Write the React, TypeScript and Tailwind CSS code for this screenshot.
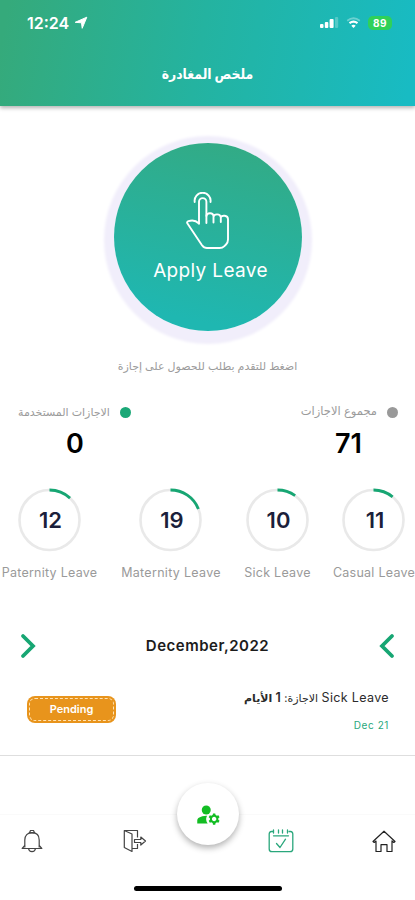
import { MdManageAccounts } from "react-icons/md";

const LEAVES = [
  { label: "Paternity Leave", days: 12, width: "w-[97px]", spacing: "tracking-[0.25px]" },
  { label: "Maternity Leave", days: 19, width: "w-[100px]", spacing: "tracking-[0.3px]" },
  { label: "Sick Leave", days: 10, width: "w-[67px]", spacing: "tracking-[0.25px]" },
  { label: "Casual Leave", days: 11, width: "w-[82px]", spacing: "tracking-[0.25px]" },
];

function StatusBar() {
  return (
    <div className="flex h-[46px] items-center justify-between pl-[27px] pr-[23px]">
      <div className="flex items-center gap-[5px]">
        <span className="text-[16px] font-semibold leading-none">12:24</span>
        <svg width="14" height="14" viewBox="0 0 14 14" fill="currentColor" stroke="currentColor" strokeLinejoin="round">
          <path d="M12.800 1.200 8.200 12.300 7.500 6.800 1.200 6.300Z" />
        </svg>
      </div>
      <div className="flex items-center">
        <svg width="19" height="12" viewBox="0 0 19 12" fill="currentColor">
          <rect x="0" y="7" width="3.500" height="4" rx="1" />
          <rect x="4.800" y="5" width="3.500" height="6" rx="1" />
          <rect x="9.600" y="2" width="4" height="9" rx="1" />
          <rect x="15" y="0" width="3.200" height="11" rx="1" opacity=".25" />
        </svg>
        <svg className="ml-[7px]" width="15" height="12" viewBox="0 0 15 12" fill="none" stroke="currentColor">
          <path d="M1.200 3.700q6.300-5 12.600 0" strokeWidth="1.800" opacity=".35" />
          <path d="M3.500 6.200q4-3 8 0" strokeWidth="2.200" />
          <path d="M5.300 8.700q2.200-1.700 4.400 0L7.500 11Z" fill="currentColor" stroke="none" />
        </svg>
        <span className="ml-[7px] flex h-[14px] w-[24px] items-center justify-center rounded-[5px] bg-[#2fd158] text-[10px] font-bold leading-none tracking-[0.5px]">
          89
        </span>
      </div>
    </div>
  );
}

function TapIcon() {
  return (
    <svg width="44" height="58" viewBox="15 12 44 58" fill="none" stroke="currentColor" strokeWidth="1.900" strokeLinecap="round" strokeLinejoin="round">
      <path d="M23.700 22a8 8 0 1 1 15.800 0" />
      <path d="M28 43.500V21.800a3.700 3.700 0 0 1 7.400 0V43" />
      <path d="M35.400 36c.3-3.300 6.600-4 7.100 0v6.500M42.500 37c.4-3.500 6.900-3.700 7.300.5v4.500M49.800 37.500c1-2.800 7-2.300 7.200 1.500v20.500q0 3-2 5l-1.600 1.600Q51.500 68 48.500 68H36q-3 0-5-2.800L26.800 59 16.300 43.300c-.6-1 .2-1.800 1.200-2.200 4.500-1.600 7.500-.6 10.500 2.400" />
    </svg>
  );
}

function LeaveRing({ days }: { days: number }) {
  return (
    <div className="grid size-[64px] place-items-center">
      <svg className="col-start-1 row-start-1" width="64" height="64" viewBox="0 0 64 64" fill="none">
        <circle cx="31.500" cy="32" r="30" stroke="#e9e9e9" strokeWidth="2.600" />
        <circle
          cx="31.500"
          cy="32"
          r="30"
          stroke="#17a673"
          strokeWidth="2.800"
          pathLength={100}
          strokeDasharray={`${days} 100`}
          transform="rotate(-90 31.500 32)"
        />
      </svg>
      <span className="col-start-1 row-start-1 pl-[2px] text-[22px] font-semibold leading-none text-[#1b1f3b]">{days}</span>
    </div>
  );
}

function BellIcon() {
  return (
    <svg width="22" height="24" viewBox="0 0 22 24" fill="none" stroke="currentColor" strokeWidth="1.200" strokeLinejoin="round">
      <path d="M8.500 3.800 9.500 1.500h3l1 2.300Z" />
      <path d="M3.800 18.500V11c0-4.500 2.700-7.300 7.200-7.300s7.200 2.800 7.200 7.300v7.500" />
      <path d="M3.800 16.500 1.200 19.500h19.600l-2.600-3M7.500 19.500c.6 4.200 6.400 4.200 7 0" />
    </svg>
  );
}

function ExitIcon() {
  return (
    <svg width="24" height="24" viewBox="0 0 24 24" fill="none" stroke="currentColor" strokeWidth="1.200" strokeLinejoin="round">
      <path d="M1.300 1.500 9 5v17.500l-7.700-4Z" />
      <path d="M1.300 1.500H14.500v7M14.500 15v4.500H9" />
      <path d="M11.500 10.500h6.300V8l4.700 4-4.700 4v-2.500h-6.300Z" />
    </svg>
  );
}

function CalendarIcon() {
  return (
    <svg width="26" height="24" viewBox="0 0 26 24" fill="none" stroke="currentColor" strokeWidth="1.300" strokeLinecap="round" strokeLinejoin="round">
      <path d="M5 2.500H3.500Q1.200 2.500 1.200 5v15q0 2.700 2.700 2.700h18.200q2.700 0 2.700-2.700V5q0-2.500-2.300-2.500H21" />
      <path d="M5.500 1v3M10.500 1v3M14.500 1v3M19.500 1v3M5.500 6.800h15M8.500 14.500l3.500 4 5.500-8.300" />
    </svg>
  );
}

function HomeIcon() {
  return (
    <svg width="24" height="23" viewBox="0 0 24 23" fill="none" stroke="currentColor" strokeWidth="1.200" strokeLinejoin="round">
      <path d="M1 11.500 12 1.200l11 10.300-1.200 1L20 11v10.500h-5v-6.800H9v6.800H4V11l-1.800 1.500Z" />
    </svg>
  );
}

interface StatProps {
  label: string;
  value: number;
  dot: string;
  text: string;
  pad: string;
}

function Stat({ label, value, dot, text, pad }: StatProps) {
  return (
    <div>
      <div className="flex h-[20px] items-center gap-[10px]">
        <span dir="rtl" className={`whitespace-nowrap text-[#9b9b9b] ${text}`}>{label}</span>
        <span className={`size-[11px] rounded-full ${dot}`} />
      </div>
      <div className={`mt-[8px] text-center text-[27px] font-semibold leading-[28px] text-black ${pad}`}>{value}</div>
    </div>
  );
}

export default function App() {
  return (
    <div className="flex h-[900px] w-[415px] flex-col overflow-hidden bg-white font-['Inter','DejaVu_Sans',sans-serif]">
      <header className="h-[106px] shrink-0 bg-[linear-gradient(100deg,#35aa7b_2%,#24b3a0_48%,#18bbc3_98%)] text-white shadow-[0_2px_4px_rgba(0,0,0,0.3)]">
        <StatusBar />
        <h1 dir="rtl" className="mt-[18px] scale-x-[0.89] text-center text-[14px] font-bold leading-[20px]">ملخص المغادرة</h1>
      </header>

      <section className="flex flex-col items-center pt-[37px]">
        <button className="flex size-[188px] flex-col items-center rounded-full bg-[linear-gradient(192deg,#32ab86_8%,#1fb7b1_88%)] pt-[49px] text-white shadow-[0_3px_3px_10px_#f1eefb]">
          <TapIcon />
          <span className="mt-[9px] pl-[6px] text-[19px] leading-[24px] tracking-[0.35px]">Apply Leave</span>
        </button>
        <p dir="rtl" className="mt-[25px] whitespace-nowrap text-[11px] leading-[20px] text-[#9b9b9b]">اضغط للتقدم بطلب للحصول على إجازة</p>
      </section>

      <section className="mt-[26px] flex justify-between pl-[18px] pr-[17px]">
        <Stat label="الاجازات المستخدمة" value={0} dot="bg-[#1ba877]" text="text-[11px]" pad="pl-px" />
        <Stat label="مجموع الاجازات" value={71} dot="bg-[#999999]" text="text-[11.500px]" pad="pr-[2px]" />
      </section>

      <section className="mt-[30px] flex gap-[23px] pl-px">
        {LEAVES.map((leave) => (
          <div key={leave.label} className={`flex shrink-0 flex-col items-center ${leave.width} last:-ml-px`}>
            <LeaveRing days={leave.days} />
            <span className={`mt-[12px] whitespace-nowrap text-[12.500px] leading-[17px] text-[#9a9a9a] ${leave.spacing}`}>{leave.label}</span>
          </div>
        ))}
      </section>

      <section className="mt-[52px] flex h-[26px] items-center justify-between px-[20px] text-[#17a673]">
        <svg width="16" height="26" viewBox="0 0 16 26" fill="none" stroke="currentColor" strokeWidth="3.800" strokeLinecap="round">
          <path d="m3 3 10 10L3 23" />
        </svg>
        <span className="text-[15px] font-semibold tracking-[0.5px] text-[#1c1c1c]">December,2022</span>
        <svg width="16" height="26" viewBox="0 0 16 26" fill="none" stroke="currentColor" strokeWidth="3.800" strokeLinecap="round">
          <path d="M13 3 3 13l10 10" />
        </svg>
      </section>

      <section className="mt-[28px] flex h-[69px] justify-between border-b border-[#dedede] pl-[27px] pr-[26px]">
        <div className="mt-[9px] h-[27px] w-[89px] rounded-[8px] bg-[#e8941c] p-[2px]">
          <div className="flex h-full items-center justify-center rounded-[6px] border border-dashed border-[#ffe3b5] text-[11px] font-semibold text-white">
            Pending
          </div>
        </div>
        <div className="flex flex-col items-end">
          <p dir="rtl" className="mt-[1px] whitespace-nowrap text-[12.500px] leading-[20px] text-[#2b2b2b]">
            <span className="tracking-[0.35px]">Sick Leave</span> <span className="text-[11px]">الاجازة:</span>{" "}
            <b className="font-semibold">1 <span className="text-[11px]">الأيام</span></b>
          </p>
          <p className="mt-[9px] text-[10px] leading-[16px] tracking-[0.6px] text-[#2aa77c]">Dec 21</p>
        </div>
      </section>

      <nav className="mt-[58px] flex h-[86px] border-t border-[#fafafa] pl-[21px] text-[#444444]">
        <div className="pt-[14px]"><BellIcon /></div>
        <div className="ml-[80px] pt-[14px]"><ExitIcon /></div>
        <div className="-mt-[32px] ml-[30px] flex size-[62px] items-center justify-center rounded-full bg-white text-[#13bd23] shadow-[0_3px_6px_rgba(0,0,0,0.3)]">
          <MdManageAccounts size={27} />
        </div>
        <div className="ml-[29px] pt-[14px] text-[#2aa77c]"><CalendarIcon /></div>
        <div className="ml-[78px] pt-[15px] text-[#222222]"><HomeIcon /></div>
      </nav>
      <div className="ml-[134px] mt-[-14px] h-[5px] w-[148px] shrink-0 rounded-full bg-black" />
    </div>
  );
}
